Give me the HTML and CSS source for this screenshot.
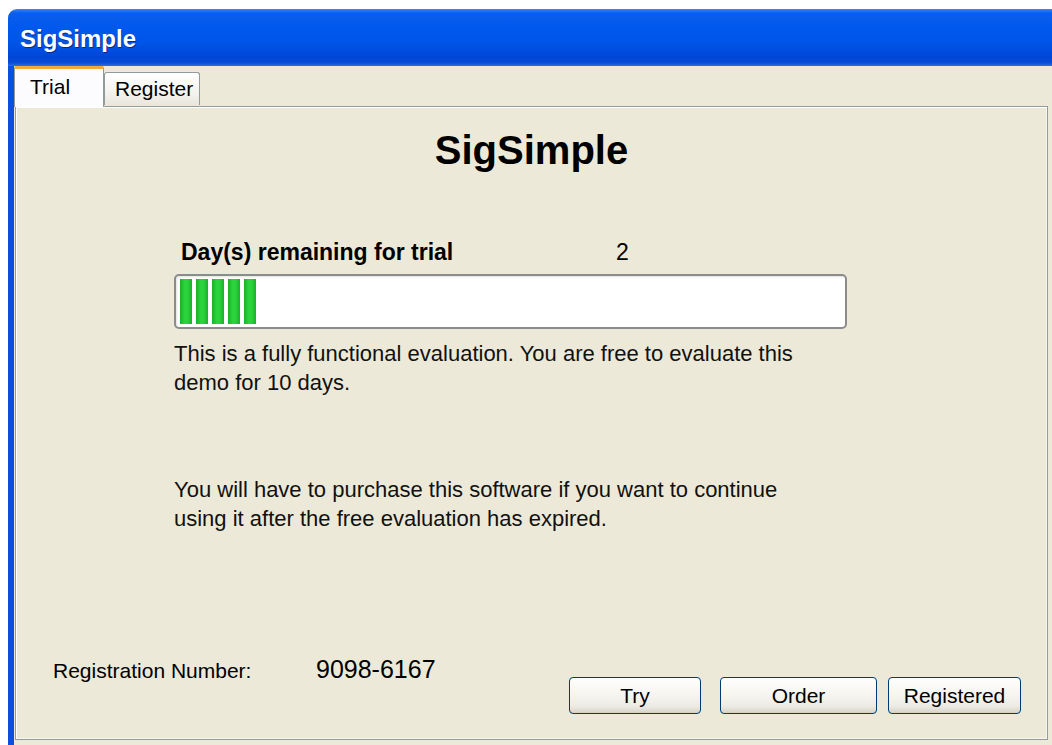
FILE: index.html
```html
<!DOCTYPE html>
<html lang="en">
<head>
<meta charset="utf-8">
<title>SigSimple</title>
<link rel="stylesheet" href="styles.css">
</head>
<body>
<div class="window">
  <div class="titlebar"><span class="title">SigSimple</span></div>
  <div class="client">
    <div class="tabs">
      <div class="tab tab-active">Trial</div>
      <div class="tab">Register</div>
    </div>
    <div class="page">
      <h1 class="product">SigSimple</h1>
      <div class="trial">
        <div class="days-row">
          <span class="days-label">Day(s) remaining for trial</span>
          <span class="days-value">2</span>
        </div>
        <div class="progress">
          <span class="chunk"></span><span class="chunk"></span><span class="chunk"></span><span class="chunk"></span><span class="chunk"></span>
        </div>
        <p class="note">This is a fully functional evaluation. You are free to evaluate this demo for 10 days.</p>
        <p class="note note-purchase">You will have to purchase this software if you want to continue using it after the free evaluation has expired.</p>
      </div>
      <div class="footer">
        <div class="reg">
          <span class="reg-label">Registration Number:</span>
          <span class="reg-value">9098-6167</span>
        </div>
        <div class="buttons">
          <button class="btn btn-try">Try</button>
          <button class="btn btn-order">Order</button>
          <button class="btn btn-registered">Registered</button>
        </div>
      </div>
    </div>
  </div>
</div>
</body>
</html>
```

FILE: styles.css
```css
html, body {
  margin: 0;
  padding: 0;
  background: #ffffff;
  overflow: hidden;
}

body {
  font-family: "Liberation Sans", Arial, sans-serif;
  color: #000;
}

.window {
  margin: 9px 0 0 8px;
  height: 736px;
  display: flex;
  flex-direction: column;
}

.titlebar {
  height: 57px;
  flex: none;
  border-top-left-radius: 9px;
  background: linear-gradient(to bottom,
    #3a86f7 0%, #0c5eec 7%, #0058ee 35%, #0054e8 60%,
    #0046d6 85%, #0a4bd6 94%, #2a6ee6 100%);
  display: flex;
  align-items: center;
  padding-left: 12px;
}

.title {
  color: #ffffff;
  font-family: "Liberation Sans", Arial, sans-serif;
  font-weight: bold;
  font-size: 24px;
  text-shadow: 1px 1px 0 #0a2a8a;
  margin-top: 2px;
}

.client {
  flex: 1;
  display: flex;
  flex-direction: column;
  background: #ece9d8;
  border-left: 6px solid #0b50dc;
}

.tabs {
  height: 40px;
  flex: none;
  display: flex;
  align-items: flex-end;
  position: relative;
  z-index: 1;
}

.tab {
  box-sizing: border-box;
  height: 33px;
  padding: 0 6px 0 10px;
  font-size: 21px;
  line-height: 31px;
  border: 1px solid #919b9c;
  border-bottom: none;
  border-radius: 3px 3px 0 0;
  background: linear-gradient(to bottom, #ffffff, #f4f3ee 60%, #e8e6dc);
  margin-bottom: 1px;
}

.tab-active {
  width: 90px;
  height: 41px;
  padding-left: 15px;
  line-height: 36px;
  margin-bottom: -1px;
  background: #fcfcfe;
  border-top: 3px solid #f2a83a;
  border-radius: 2px 2px 0 0;
}

.page {
  flex: 1;
  margin: 0 4px 5px 1px;
  border: 1px solid #919b9c;
  box-shadow: inset 1px 1px 0 #ffffff, inset -1px -1px 0 #f7f6f1;
  display: flex;
  flex-direction: column;
}

.product {
  margin: 20px 0 0;
  text-align: center;
  font-size: 40px;
  line-height: 46px;
  font-weight: bold;
}

.trial {
  margin: 66px 0 0 158px;
  width: 673px;
}

.days-row {
  display: flex;
  align-items: baseline;
  padding-left: 7px;
  height: 30px;
}

.days-label {
  font-weight: bold;
  font-size: 23px;
  width: 435px;
}

.days-value {
  font-size: 23px;
}

.progress {
  box-sizing: border-box;
  height: 55px;
  margin-top: 5px;
  border: 2px solid #8c8c8c;
  border-radius: 5px;
  background: #ffffff;
  box-shadow: inset 1px 1px 2px rgba(0, 0, 0, 0.12);
  padding: 3px 4px;
  display: flex;
  gap: 4px;
}

.chunk {
  width: 12px;
  background: linear-gradient(to right, #1bb02a, #2bd43c 40%, #2bd43c 60%, #1bb02a);
}

.note {
  margin: 10px 0 0;
  width: 630px;
  font-size: 22px;
  line-height: 29px;
  color: #111;
}

.note-purchase {
  margin-top: 78px;
}

.footer {
  margin-top: auto;
  display: flex;
  justify-content: space-between;
  align-items: flex-start;
  padding: 0 26px 25px 37px;
}

.reg {
  display: flex;
  align-items: baseline;
}

.reg-label {
  font-size: 21px;
  width: 263px;
}

.reg-value {
  font-size: 25px;
}

.buttons {
  display: flex;
  gap: 11px;
  margin-top: 22px;
}

.btn {
  box-sizing: border-box;
  height: 37px;
  font-family: "Liberation Sans", Arial, sans-serif;
  font-size: 21px;
  color: #000;
  border: 1px solid #003c74;
  border-radius: 4px;
  background: linear-gradient(to bottom, #ffffff 0%, #f5f4ef 50%, #ecebe5 80%, #d8d3c8 100%);
  box-shadow: inset 0 -1px 0 #d6d0c5;
  padding: 0;
}

.btn-try {
  width: 132px;
  margin-right: 8px;
}

.btn-order {
  width: 157px;
}

.btn-registered {
  width: 133px;
}
```
